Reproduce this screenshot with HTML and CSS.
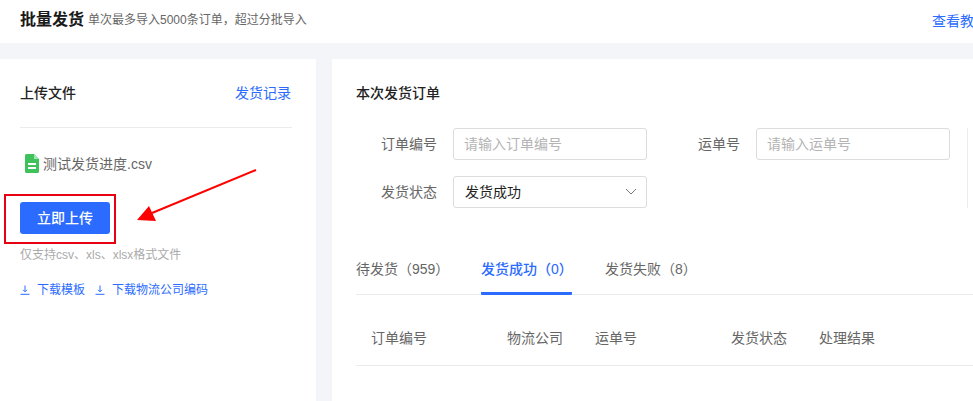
FILE: index.html
```html
<!DOCTYPE html>
<html lang="zh">
<head>
<meta charset="utf-8">
<title>批量发货</title>
<link rel="stylesheet" href="styles.css">
</head>
<body>
<header class="topbar">
  <h1 class="title">批量发货</h1>
  <span class="subtitle">单次最多导入5000条订单，超过分批导入</span>
  <a class="tutorial">查看教程</a>
</header>
<main class="content">
  <section class="left">
    <div class="left-head">
      <h2 class="section-title">上传文件</h2>
      <a class="records">发货记录</a>
    </div>
    <div class="file">
      <svg class="file-icon" width="14" height="19" viewBox="0 0 14 19"><path d="M1.5 0H9l5 5v12.500a1.500 1.500 0 0 1-1.500 1.500h-11A1.500 1.500 0 0 1 0 17.500v-16A1.500 1.500 0 0 1 1.500 0z" fill="#3fc25c"/><path d="M9 0l5 5H9z" fill="#a5e3b3"/><rect x="3" y="9" width="8" height="2" fill="#fff"/><rect x="3" y="13" width="8" height="2" fill="#fff"/></svg>
      <span>测试发货进度.csv</span>
    </div>
    <button class="upload">立即上传</button>
    <p class="hint">仅支持csv、xls、xlsx格式文件</p>
    <div class="downloads">
      <a class="dl"><svg width="10" height="10" viewBox="0 0 10 10"><path d="M5 0.500V6.500M3 4.800L5 6.800L7 4.800M0.500 9.300H9.500" fill="none" stroke="#2b6bff" stroke-width="1"/></svg>下载模板</a>
      <a class="dl"><svg width="10" height="10" viewBox="0 0 10 10"><path d="M5 0.500V6.500M3 4.800L5 6.800L7 4.800M0.500 9.300H9.500" fill="none" stroke="#2b6bff" stroke-width="1"/></svg>下载物流公司编码</a>
    </div>
  </section>
  <section class="right">
    <h2 class="section-title">本次发货订单</h2>
    <div class="filters">
      <div class="form-grid">
        <label class="lbl">订单编号</label>
        <div class="input placeholder">请输入订单编号</div>
        <label class="lbl">运单号</label>
        <div class="input placeholder">请输入运单号</div>
        <label class="lbl">发货状态</label>
        <div class="input select">发货成功
          <svg width="12" height="7" viewBox="0 0 12 7"><path d="M1 1l5 5 5-5" fill="none" stroke="#777" stroke-width="1"/></svg>
        </div>
      </div>
      <div class="divider"></div>
    </div>
    <nav class="tabs">
      <a class="tab">待发货（959）</a>
      <a class="tab active">发货成功（0）</a>
      <a class="tab">发货失败（8）</a>
    </nav>
    <div class="thead">
      <span class="c1">订单编号</span>
      <span class="c2">物流公司</span>
      <span class="c3">运单号</span>
      <span class="c4">发货状态</span>
      <span class="c5">处理结果</span>
    </div>
  </section>
</main>
<div class="red-box"></div>
<svg class="arrow" width="124" height="56" viewBox="0 0 124 56"><path d="M120 1L16 44" stroke="#f00" stroke-width="2" fill="none"/><path d="M1 51L13 37L20 52z" fill="#f00"/></svg>
</body>
</html>
```
FILE: styles.css
```css
* { box-sizing: border-box; }
html, body { margin: 0; height: 100%; overflow: hidden; }
body {
  position: relative;
  background: #f4f5f9;
  font-family: "Liberation Sans", "Noto Sans CJK SC", sans-serif;
  color: #666;
  font-size: 14px;
}
a { text-decoration: none; }
h1, h2, p { margin: 0; font-weight: 500; }

.topbar {
  height: 43px;
  background: #fff;
  display: flex;
  align-items: center;
  padding: 0 0 3px 20px;
  white-space: nowrap;
  overflow: hidden;
}
.title { font-size: 16px; line-height: 22px; color: #1a1a1a; font-weight: 700; }
.subtitle { font-size: 12px; color: #666; margin-left: 4px; line-height: 18px; }
.tutorial { color: #2b6bff; font-size: 14px; margin-left: auto; margin-right: -15px; }

.content { display: flex; gap: 16px; margin-top: 16px; height: 342px; }

.left { width: 316px; flex: none; background: #fff; padding: 0 24px 0 20px; }
.left-head {
  display: flex;
  justify-content: space-between;
  align-items: center;
  height: 69px;
  padding-bottom: 2px;
  border-bottom: 1px solid #ececee;
}
.section-title { font-size: 14px; line-height: 20px; color: #222; font-weight: 500; padding-top: 2px; }
.records { color: #2b6bff; font-size: 14px; margin-right: 1px; }
.file {
  display: flex;
  align-items: center;
  gap: 4px;
  margin-top: 25px;
  padding-left: 5px;
  height: 20px;
  color: #666;
}
.file-icon { flex: none; }
.upload {
  display: block;
  margin-top: 29px;
  width: 90px;
  height: 32px;
  border: 0;
  border-radius: 3px;
  padding: 0 0 2px;
  background: #2b6bff;
  color: #fff;
  font: inherit;
  font-weight: 500;
}
.hint { font-size: 12px; line-height: 18px; color: #aaa; font-weight: 400; margin-top: 12px; }
.downloads { display: flex; gap: 10px; margin-top: 17px; }
.dl { display: flex; align-items: center; gap: 7px; color: #2b6bff; font-size: 12px; line-height: 18px; }

.right { flex: 1; min-width: 0; background: #fff; padding: 22px 0 0 24px; }
.filters { display: flex; margin-top: 25px; }
.form-grid {
  display: grid;
  grid-template-columns: 97px 194px 109px 194px;
  grid-auto-rows: 32px;
  row-gap: 16px;
  align-items: center;
}
.lbl { text-align: right; padding: 0 16px 2px 0; color: #666; }
.input {
  height: 32px;
  width: 194px;
  border: 1px solid #dcdcdc;
  border-radius: 3px;
  padding: 0 11px 2px 10px;
  display: flex;
  align-items: center;
  background: #fff;
}
.placeholder { color: #b4b4b4; }
.select { color: #222; justify-content: space-between; padding: 0 9px 2px 11px; }
.divider { width: 1px; height: 80px; background: #ececee; margin-left: 17px; }

.tabs {
  display: flex;
  gap: 31px;
  margin-top: 35px;
  height: 52px;
  border-bottom: 1px solid #ececee;
}
.tab {
  color: #666;
  height: 52px;
  padding-top: 16px;
  line-height: 20px;
  white-space: nowrap;
  width: 94px;
}
.tab.active { color: #2b6bff; font-weight: 500; border-bottom: 3px solid #2b6bff; border-radius: 0 0 1px 1px; width: 91px; margin-right: 2px; }
.thead {
  display: flex;
  align-items: center;
  height: 71px;
  padding-top: 14px;
  border-bottom: 1px solid #ececee;
  color: #666;
  white-space: nowrap;
}
.thead span { display: block; }
.c1 { margin-left: 15px; width: 136px; }
.c2 { width: 88px; }
.c3 { width: 136px; }
.c4 { width: 88px; }

.red-box {
  position: absolute;
  left: 4px;
  top: 194px;
  width: 112px;
  height: 50px;
  border: 2px solid #e60012;
}
.arrow { position: absolute; left: 136px; top: 169px; }
```
